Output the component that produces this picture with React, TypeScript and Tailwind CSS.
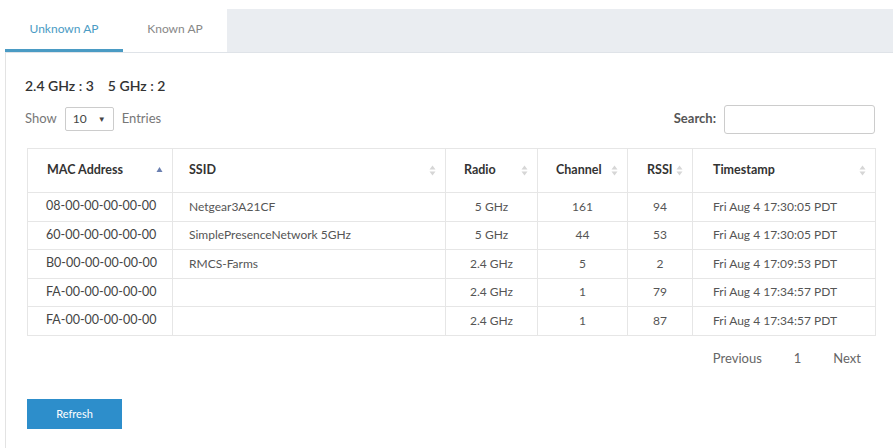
import React from 'react';

type Row = { mac: string; ssid: string; radio: string; channel: string; rssi: string; ts: string };

const rows: Row[] = [
  { mac: '08-00-00-00-00-00', ssid: 'Netgear3A21CF', radio: '5 GHz', channel: '161', rssi: '94', ts: 'Fri Aug 4 17:30:05 PDT' },
  { mac: '60-00-00-00-00-00', ssid: 'SimplePresenceNetwork 5GHz', radio: '5 GHz', channel: '44', rssi: '53', ts: 'Fri Aug 4 17:30:05 PDT' },
  { mac: 'B0-00-00-00-00-00', ssid: 'RMCS-Farms', radio: '2.4 GHz', channel: '5', rssi: '2', ts: 'Fri Aug 4 17:09:53 PDT' },
  { mac: 'FA-00-00-00-00-00', ssid: '', radio: '2.4 GHz', channel: '1', rssi: '79', ts: 'Fri Aug 4 17:34:57 PDT' },
  { mac: 'FA-00-00-00-00-00', ssid: '', radio: '2.4 GHz', channel: '1', rssi: '87', ts: 'Fri Aug 4 17:34:57 PDT' },
];

function SortIcon({ active }: { active?: boolean }) {
  if (active) {
    return (
      <svg width="7" height="10" viewBox="0 0 7 10" className="shrink-0">
        <path d="M3.5 1 L6.5 6 L0.5 6 Z" fill="#6a7fb0" />
      </svg>
    );
  }
  return (
    <svg width="7" height="11" viewBox="0 0 7 11" className="shrink-0">
      <path d="M3.5 0.5 L6.5 4.5 L0.5 4.5 Z" fill="#d6d6d6" />
      <path d="M3.5 10.5 L6.5 6.5 L0.5 6.5 Z" fill="#d6d6d6" />
    </svg>
  );
}

const th = 'border border-[#e6e6e6] text-left pr-[9px] font-bold';
const td = 'border border-[#e6e6e6]';

export default function App() {
  return (
    <div className="w-[893px] h-[448px] overflow-hidden bg-white text-[#555]" style={{ fontFamily: 'Lato, "Open Sans", sans-serif' }}>
      {/* Tabs */}
      <div className="pt-[9px] pl-[5px]">
        <div className="flex h-[44px] border-b border-[#dfe3e8]">
          <div className="w-[118px] flex items-center justify-center text-[12px] text-[#4a9bc4] border-b-[3px] border-[#4a9bc4] bg-white">
            Unknown AP
          </div>
          <div className="w-[104px] flex items-center justify-center text-[12px] text-[#888] bg-white pb-[3px]">
            Known AP
          </div>
          <div className="flex-1 bg-[#eaedf1]" />
        </div>
      </div>

      {/* Panel */}
      <div className="ml-[5px] border-l border-[#e3e3e3] h-[395px] pl-[19px] pr-[17px]">
        <div className="pt-[22px] text-[14px] font-semibold text-[#333] flex gap-[14px]">
          <span>2.4 GHz : 3</span>
          <span>5 GHz : 2</span>
        </div>

        <div className="flex items-center justify-between mt-[8px] h-[30px]">
          <div className="flex items-center text-[13px] text-[#777]">
            <span>Show</span>
            <div className="mx-[8px] w-[49px] h-[24px] border border-[#ccc] rounded-[2px] flex items-center justify-between px-[7px] text-[12px] text-[#444]">
              <span>10</span>
              <span className="text-[8px]">▼</span>
            </div>
            <span>Entries</span>
          </div>
          <div className="flex items-center mr-[1px]">
            <span className="text-[13px] font-bold text-[#555] mr-[8px]">Search:</span>
            <div className="w-[151px] h-[29px] border border-[#ccc] rounded-[3px]" />
          </div>
        </div>

        {/* Table */}
        <table className="mt-[14px] ml-[2px] w-[848px] border-collapse text-[12px] table-fixed">
          <colgroup>
            <col className="w-[145px]" />
            <col className="w-[273px]" />
            <col className="w-[92px]" />
            <col className="w-[90px]" />
            <col className="w-[65px]" />
            <col className="w-[183px]" />
          </colgroup>
          <thead>
            <tr className="h-[44px] text-[#333] text-[12.5px]">
              <th className={`${th} pl-[19px]`}>
                <div className="flex items-center justify-between">MAC Address<SortIcon active /></div>
              </th>
              <th className={`${th} pl-[16px]`}>
                <div className="flex items-center justify-between">SSID<SortIcon /></div>
              </th>
              <th className={`${th} pl-[18px]`}>
                <div className="flex items-center justify-between">Radio<SortIcon /></div>
              </th>
              <th className={`${th} pl-[18px]`}>
                <div className="flex items-center justify-between">Channel<SortIcon /></div>
              </th>
              <th className={`${th} pl-[19px]`}>
                <div className="flex items-center justify-between">RSSI<SortIcon /></div>
              </th>
              <th className={`${th} pl-[20px]`}>
                <div className="flex items-center justify-between">Timestamp<SortIcon /></div>
              </th>
            </tr>
          </thead>
          <tbody>
            {rows.map((r, i) => (
              <tr key={i} className="h-[28.5px]">
                <td className={`${td} pl-[18px] text-[#444] text-[12.5px]`}>{r.mac}</td>
                <td className={`${td} pl-[16px]`}>{r.ssid}</td>
                <td className={`${td} text-center`}>{r.radio}</td>
                <td className={`${td} text-center`}>{r.channel}</td>
                <td className={`${td} text-center`}>{r.rssi}</td>
                <td className={`${td} pl-[20px]`}>{r.ts}</td>
              </tr>
            ))}
          </tbody>
        </table>

        <div className="flex justify-end items-center gap-[32px] mt-[13px] pr-[15px] text-[13px] text-[#666]">
          <span>Previous</span>
          <span>1</span>
          <span>Next</span>
        </div>

        <button className="mt-[31px] w-[95px] h-[30px] bg-[#2d8ecb] text-white text-[11px] ml-[2px]">
          Refresh
        </button>
      </div>
    </div>
  );
}
